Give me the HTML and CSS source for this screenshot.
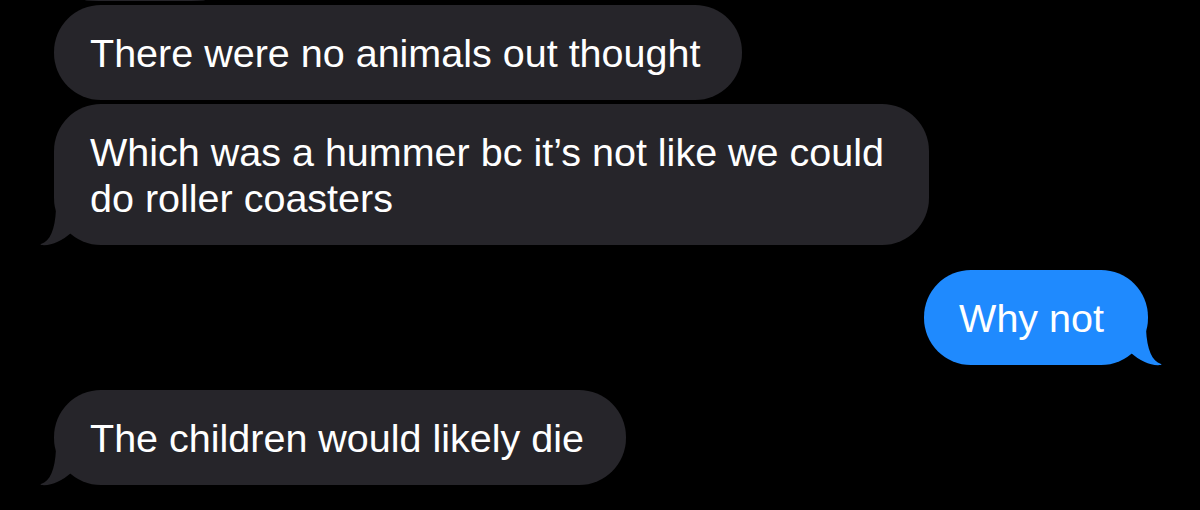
FILE: index.html
```html
<!DOCTYPE html>
<html lang="en">
<head>
<meta charset="utf-8">
<title>Messages</title>
<link rel="stylesheet" href="styles.css">
</head>
<body>
<div class="thread">
  <div class="stub"></div>
  <div class="bubble them">There were no animals out thought</div>
  <div class="bubble them">Which was a hummer bc it’s not like we could do roller coasters<svg class="tail tail-left" viewBox="-16 -36 50 36" aria-hidden="true"><path d="M2 -36 C1 -15 -4 -4 -13 -1 Q-14.5 -0.3 -12.5 0 C-3 1 8 -4 17 -12 L17 -36 Z"/></svg></div>
  <div class="bubble me group-start">Why not<svg class="tail tail-right" viewBox="-16 -36 50 36" aria-hidden="true"><path d="M2 -36 C1 -15 -4 -4 -13 -1 Q-14.5 -0.3 -12.5 0 C-3 1 8 -4 17 -12 L17 -36 Z"/></svg></div>
  <div class="bubble them group-start">The children would likely die<svg class="tail tail-left" viewBox="-16 -36 50 36" aria-hidden="true"><path d="M2 -36 C1 -15 -4 -4 -13 -1 Q-14.5 -0.3 -12.5 0 C-3 1 8 -4 17 -12 L17 -36 Z"/></svg></div>
</div>
</body>
</html>
```
FILE: styles.css
```css
html, body {
  margin: 0;
  padding: 0;
  background: #000;
}

body {
  width: 1200px;
  height: 510px;
  overflow: hidden;
  font-family: "Liberation Sans", Arial, sans-serif;
  -webkit-font-smoothing: antialiased;
}

.thread {
  display: flex;
  flex-direction: column;
  align-items: flex-start;
  gap: 4px;
  padding: 0 52px 0 54px;
}

.stub {
  width: 120px;
  height: 1px;
  margin-left: 31px;
  background: #26252a;
  border-bottom-left-radius: 22px 1px;
  border-bottom-right-radius: 22px 1px;
}

.bubble {
  position: relative;
  box-sizing: border-box;
  max-width: 875px;
  padding: 24.5px 42px 24.5px 36px;
  border-radius: 47px;
  font-size: 39.5px;
  line-height: 46px;
  color: #fff;
}

.bubble.them {
  background: #26252a;
  color: #fff;
}

.bubble.them .tail {
  color: #26252a;
}

.bubble.me {
  align-self: flex-end;
  background: #1f8afe;
  padding-left: 35px;
  padding-right: 44px;
}

.bubble.me .tail {
  color: #1f8afe;
}

.group-start {
  margin-top: 21px;
}

.tail {
  position: absolute;
  bottom: 0;
  width: 50px;
  height: 36px;
  fill: currentColor;
  overflow: visible;
}

.tail-left {
  left: -16px;
}

.tail-right {
  right: -16px;
  transform: scaleX(-1);
}
```
